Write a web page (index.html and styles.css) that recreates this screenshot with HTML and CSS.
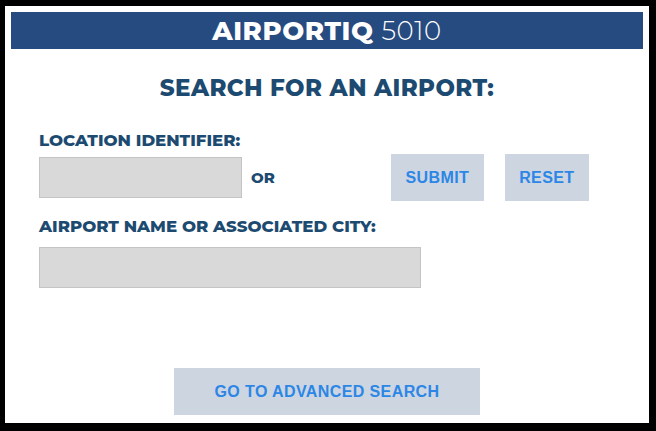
FILE: index.html
```html
<!DOCTYPE html>
<html lang="en">
<head>
    <meta charset="UTF-8">
    <meta name="viewport" content="width=device-width, initial-scale=1.0">
    <title>AirportIQ 5010</title>
    <link rel="stylesheet" href="styles.css">
</head>
<body>
    <div class="panel">
        <header class="banner">
            <span class="brand">AIRPORTIQ</span> <span class="brand-num">5010</span>
        </header>

        <h1 class="title">SEARCH FOR AN AIRPORT:</h1>

        <form class="search">
            <label class="label" for="loc">LOCATION IDENTIFIER:</label>
            <div class="row">
                <input class="field field-short" id="loc" type="text">
                <span class="or">OR</span>
                <button type="button" class="btn btn-submit">SUBMIT</button>
                <button type="reset" class="btn btn-reset">RESET</button>
            </div>

            <label class="label label-second" for="name">AIRPORT NAME OR ASSOCIATED CITY:</label>
            <input class="field field-long" id="name" type="text">
        </form>

        <div class="advanced">
            <button type="button" class="btn btn-advanced">GO TO ADVANCED SEARCH</button>
        </div>
    </div>
</body>
</html>
```

FILE: styles.css
```css
* {
    margin: 0;
    padding: 0;
    box-sizing: border-box;
}

html, body {
    height: 100%;
}

body {
    background-color: #000;
    padding: 6px 7px 8px 5px;
    font-family: "Montserrat", "Open Sans", sans-serif;
}

.panel {
    height: 100%;
    background-color: #fff;
    padding: 6px 6px 0 6px;
    display: flex;
    flex-direction: column;
}

.banner {
    height: 37px;
    background-color: #264b80;
    color: #fff;
    display: flex;
    justify-content: center;
    align-items: center;
    gap: 8px;
    font-size: 26px;
    letter-spacing: 0.6px;
}

.brand {
    font-weight: 800;
}

.brand-num {
    font-weight: 300;
}

.title {
    margin-top: 25px;
    line-height: 28px;
    text-align: center;
    color: #1d4a70;
    font-size: 23px;
    font-weight: 800;
    letter-spacing: 0.4px;
}

.search {
    padding-left: 28px;
    margin-top: 28px;
}

.label {
    display: block;
    line-height: 20px;
    color: #1d4a70;
    font-size: 16.6px;
    font-weight: 800;
}

.label-second {
    margin-top: 15px;
    margin-bottom: 11px;
}

.row {
    display: flex;
    align-items: center;
    margin-top: 4px;
}

.field {
    height: 41px;
    background-color: #d9d9d9;
    border: 1px solid #c4c4c4;
    display: block;
}

.field-short {
    width: 203px;
}

.field-long {
    width: 382px;
}

.or {
    margin-left: 9px;
    color: #1d4a70;
    font-size: 15px;
    font-weight: 800;
}

.btn {
    border: none;
    background-color: #cdd5e1;
    color: #2b86e6;
    font-family: "Liberation Sans", Arial, sans-serif;
    font-weight: bold;
    font-size: 16px;
    letter-spacing: 0.4px;
    height: 47px;
}

.btn-submit {
    width: 93px;
    margin-left: 116px;
}

.btn-reset {
    width: 84px;
    margin-left: 21px;
}

.advanced {
    margin-top: auto;
    margin-bottom: 8px;
    display: flex;
    justify-content: center;
}

.btn-advanced {
    width: 306px;
}
```
